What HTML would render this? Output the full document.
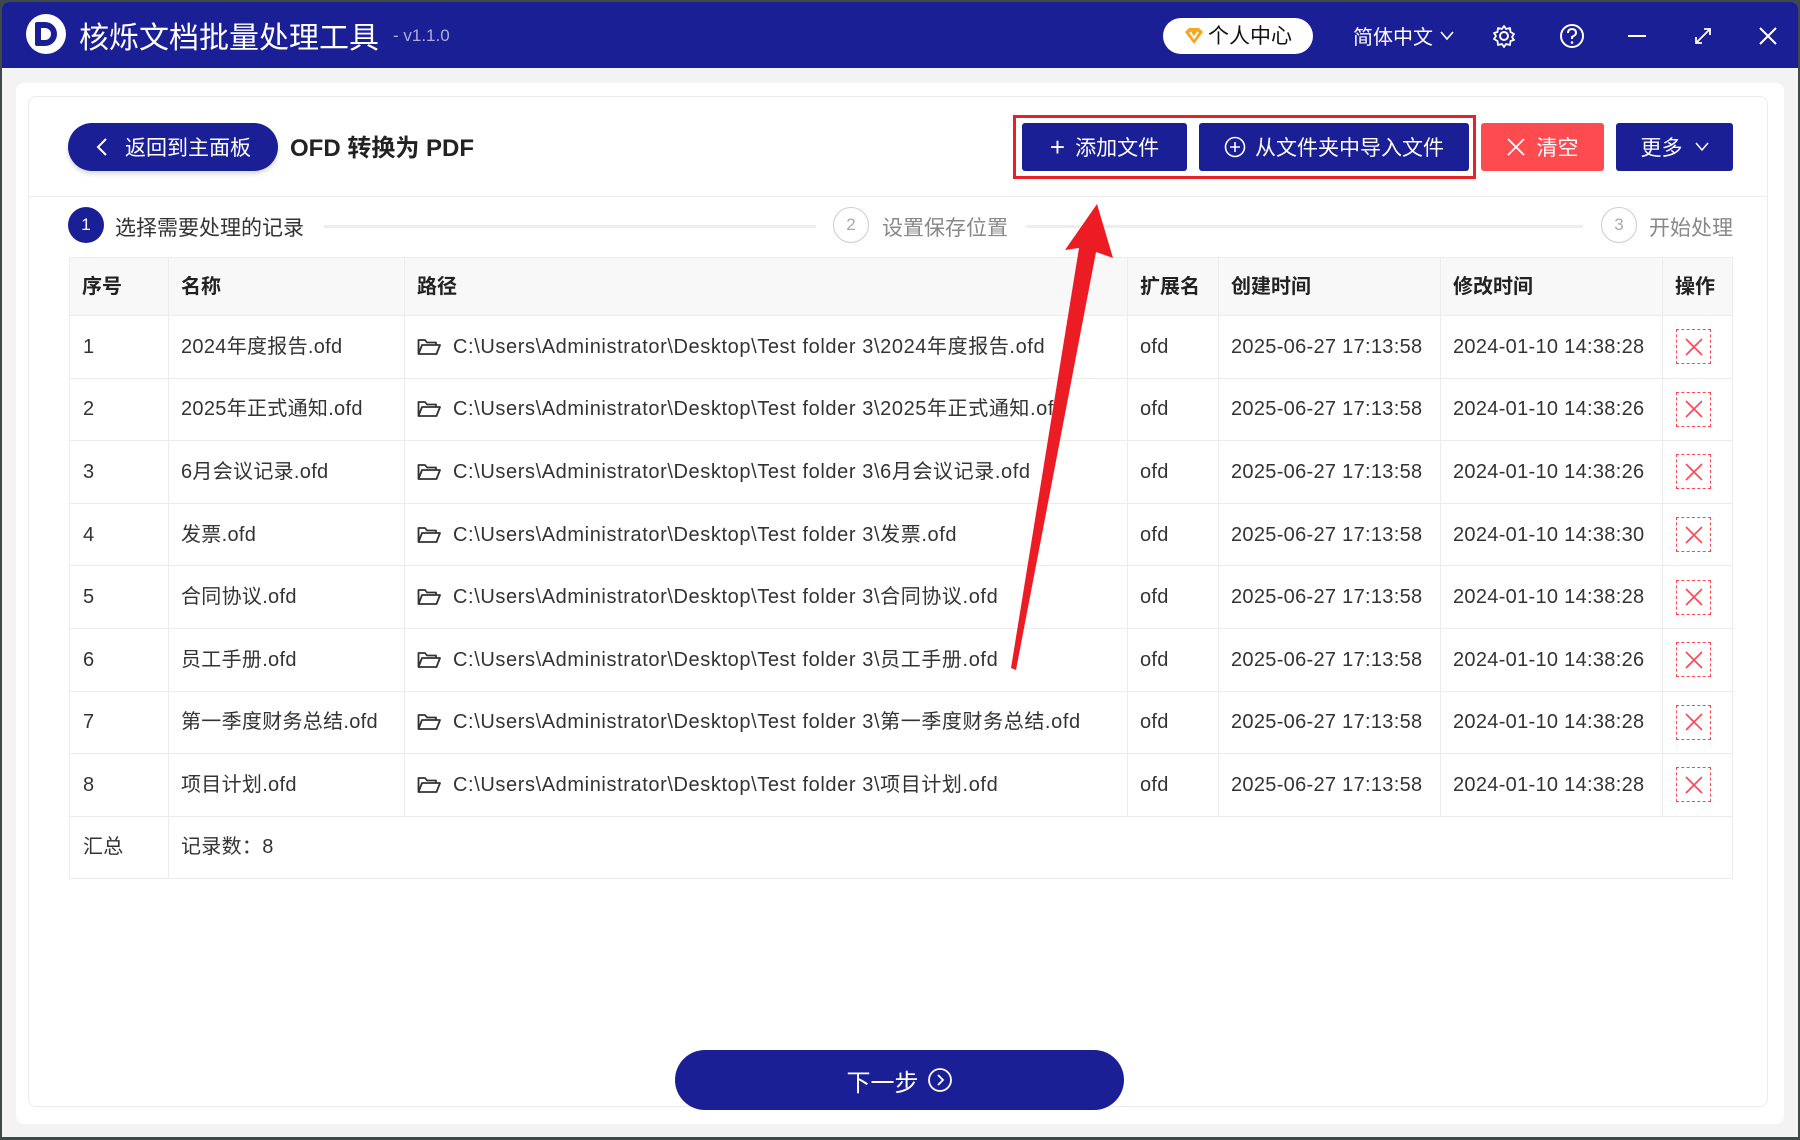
<!DOCTYPE html>
<html><head><meta charset="utf-8"><style>
*{margin:0;padding:0;box-sizing:border-box}
body{width:1800px;height:1140px;overflow:hidden;background:#3d4a48;font-family:"Liberation Sans","Noto Sans CJK SC",sans-serif;position:relative}
.win{position:absolute;left:2px;top:2px;width:1796px;height:1135px;background:#f3f3f3;border-radius:6px 6px 0 0;overflow:hidden}
.bar{position:absolute;left:0;top:0;width:100%;height:66px;background:#1a1f96}
.abs{position:absolute}
.outer{position:absolute;left:14px;top:81px;width:1768px;height:1041px;background:#fff;border-radius:8px}
.card{position:absolute;left:28px;top:96px;width:1740px;height:1011px;background:#fff;border:1px solid #ececec;border-radius:8px}
.btn{position:absolute;top:123px;height:48px;background:#1a1f96;color:#fff;font-size:21px;display:flex;align-items:center;justify-content:center;border-radius:3px}
table{position:absolute;left:69px;top:257px;border-collapse:collapse;table-layout:fixed;width:1663px}
td,th{border:1px solid #ececec;font-size:20px;color:#333;text-align:left;padding-left:12px;white-space:nowrap;overflow:hidden;vertical-align:middle}
th{height:58px;background:#f8f8f8;font-weight:bold;color:#222;line-height:56px}
td{height:62.6px;font-weight:normal;line-height:60px;letter-spacing:0.3px}
td.n{padding-left:13px}
.path{display:flex;align-items:center;letter-spacing:0.6px;height:60px}
.del{width:35px;height:35px;border:1px dashed #f45;display:flex;align-items:center;justify-content:center;margin-left:1px}
.stepc{position:absolute;top:207px;width:36px;height:36px;border-radius:50%;font-size:17px;display:flex;align-items:center;justify-content:center}
.stept{position:absolute;top:212px;font-size:21px}
</style></head><body>
<div class="win">
<div class="bar">
 <div class="abs" style="left:24px;top:12px;width:40px;height:40px;border-radius:50%;background:#fff;"></div>
 <div class="abs" style="left:33px;top:20px;width:22px;height:24px;border:6px solid #1a1f96;border-radius:2px 12px 12px 2px;"></div>
 <div class="abs" style="left:77px;top:11px;color:#fff;font-size:30px;">核烁文档批量处理工具</div>
 <div class="abs" style="left:391px;top:24px;color:#aab0d8;font-size:17px;">- v1.1.0</div>
 <div class="abs" style="left:1161px;top:16px;width:150px;height:36px;background:#fff;border-radius:18px;"></div>
 <svg class="abs" style="left:1182px;top:25px" width="20" height="18" viewBox="0 0 20 18"><path d="M1 5 L5 1 H15 L19 5 L10 17Z" fill="#f5a623"/><path d="M6 5 L10 11 L14 5" stroke="#fff" stroke-width="2" fill="none"/></svg>
 <div class="abs" style="left:1206px;top:18px;font-size:21px;color:#111;">个人中心</div>
 <div class="abs" style="left:1351px;top:19px;font-size:20px;color:#fff;">简体中文</div>
 <svg class="abs" style="left:1438px;top:29px" width="14" height="10"><path d="M1 1 L7 8 L13 1" stroke="#fff" stroke-width="1.6" fill="none"/></svg>
 <svg class="abs" style="left:1490px;top:22px" width="24" height="24" viewBox="0 0 24 24"><circle cx="12" cy="12" r="4" stroke="#fff" stroke-width="2" fill="none"/><path d="M12 2 L14 5 L18 4 L18.5 8 L22 10 L20 13 L22 16 L18.5 17 L18 21 L14 20 L12 23 L10 20 L6 21 L5.5 17 L2 15 L4 12 L2 9 L5.5 8 L6 4 L10 5Z" stroke="#fff" stroke-width="1.8" fill="none" stroke-linejoin="round"/></svg>
 <svg class="abs" style="left:1557px;top:21px" width="26" height="26" viewBox="0 0 26 26"><circle cx="13" cy="13" r="11" stroke="#fff" stroke-width="2" fill="none"/><path d="M9 10 Q9 6 13 6 Q17 6 17 10 Q17 12 13 14 V16" stroke="#fff" stroke-width="2" fill="none"/><circle cx="13" cy="19.5" r="1.3" fill="#fff"/></svg>
 <div class="abs" style="left:1626px;top:33px;width:18px;height:2px;background:#fff"></div>
 <svg class="abs" style="left:1691px;top:24px" width="20" height="20"><path d="M3 17 L17 3 M11 3 H17 V9 M3 11 V17 H9" stroke="#fff" stroke-width="1.8" fill="none"/></svg>
 <svg class="abs" style="left:1756px;top:24px" width="20" height="20"><path d="M2 2 L18 18 M18 2 L2 18" stroke="#fff" stroke-width="2"/></svg>
</div>
<div class="outer"></div>
</div>
<div class="card"></div>
<div class="btn" style="left:68px;width:210px;border-radius:24px;box-shadow:0 3px 5px rgba(0,0,0,.15)"><svg width="14" height="20" style="margin-right:16px"><path d="M11 2 L3 10 L11 18" stroke="#fff" stroke-width="2" fill="none"/></svg>返回到主面板</div>
<div class="abs" style="left:290px;top:128px;font-size:24px;font-weight:bold;color:#222">OFD 转换为 PDF</div>
<div class="abs" style="left:1013px;top:115px;width:463px;height:64px;border:3px solid #e8202a"></div>
<div class="btn" style="left:1022px;width:165px"><span style="font-size:26px;margin-right:10px;font-weight:300">+</span>添加文件</div>
<div class="btn" style="left:1199px;width:270px"><svg width="22" height="22" style="margin-right:9px"><circle cx="11" cy="11" r="9.5" stroke="#fff" stroke-width="1.6" fill="none"/><path d="M11 6V16M6 11H16" stroke="#fff" stroke-width="1.6"/></svg>从文件夹中导入文件</div>
<div class="btn" style="left:1481px;width:123px;background:#fe4b50"><svg width="18" height="18" style="margin-right:12px"><path d="M1 1L17 17M17 1L1 17" stroke="#fff" stroke-width="1.8"/></svg>清空</div>
<div class="btn" style="left:1616px;width:117px">更多<svg width="14" height="10" style="margin-left:12px"><path d="M1 1L7 8L13 1" stroke="#fff" stroke-width="1.5" fill="none"/></svg></div>
<div class="abs" style="left:29px;top:196px;width:1739px;height:1px;background:#ececec"></div>
<div class="stepc" style="left:68px;background:#1a1f96;color:#fff">1</div>
<div class="stept" style="left:115px;color:#333">选择需要处理的记录</div>
<div class="abs" style="left:324px;top:225px;width:492px;height:3px;background:#eee"></div>
<div class="stepc" style="left:833px;border:1.5px solid #ccc;color:#aaa">2</div>
<div class="stept" style="left:882px;color:#888">设置保存位置</div>
<div class="abs" style="left:1026px;top:225px;width:557px;height:3px;background:#eee"></div>
<div class="stepc" style="left:1601px;border:1.5px solid #ccc;color:#aaa">3</div>
<div class="stept" style="left:1649px;color:#888">开始处理</div>
<table>
<colgroup><col style="width:99px"><col style="width:236px"><col style="width:723px"><col style="width:91px"><col style="width:222px"><col style="width:222px"><col style="width:70px"></colgroup>
<tr><th>序号</th><th>名称</th><th>路径</th><th>扩展名</th><th>创建时间</th><th>修改时间</th><th>操作</th></tr>
<tr><td class="n">1</td><td>2024年度报告.ofd</td><td><div class="path"><svg width="24" height="18" style="margin-right:12px"><path d="M1.5 16V2H8L10 4.5H19V7M1.5 16L5 7H23L19.5 16Z" stroke="#333" stroke-width="1.8" fill="none" stroke-linejoin="round"/></svg>C:\Users\Administrator\Desktop\Test folder 3\2024年度报告.ofd</div></td><td>ofd</td><td>2025-06-27 17:13:58</td><td>2024-01-10 14:38:28</td><td><div class="del"><svg width="18" height="18"><path d="M1 1L17 17M17 1L1 17" stroke="#f45" stroke-width="1.6"/></svg></div></td></tr>
<tr><td class="n">2</td><td>2025年正式通知.ofd</td><td><div class="path"><svg width="24" height="18" style="margin-right:12px"><path d="M1.5 16V2H8L10 4.5H19V7M1.5 16L5 7H23L19.5 16Z" stroke="#333" stroke-width="1.8" fill="none" stroke-linejoin="round"/></svg>C:\Users\Administrator\Desktop\Test folder 3\2025年正式通知.ofd</div></td><td>ofd</td><td>2025-06-27 17:13:58</td><td>2024-01-10 14:38:26</td><td><div class="del"><svg width="18" height="18"><path d="M1 1L17 17M17 1L1 17" stroke="#f45" stroke-width="1.6"/></svg></div></td></tr>
<tr><td class="n">3</td><td>6月会议记录.ofd</td><td><div class="path"><svg width="24" height="18" style="margin-right:12px"><path d="M1.5 16V2H8L10 4.5H19V7M1.5 16L5 7H23L19.5 16Z" stroke="#333" stroke-width="1.8" fill="none" stroke-linejoin="round"/></svg>C:\Users\Administrator\Desktop\Test folder 3\6月会议记录.ofd</div></td><td>ofd</td><td>2025-06-27 17:13:58</td><td>2024-01-10 14:38:26</td><td><div class="del"><svg width="18" height="18"><path d="M1 1L17 17M17 1L1 17" stroke="#f45" stroke-width="1.6"/></svg></div></td></tr>
<tr><td class="n">4</td><td>发票.ofd</td><td><div class="path"><svg width="24" height="18" style="margin-right:12px"><path d="M1.5 16V2H8L10 4.5H19V7M1.5 16L5 7H23L19.5 16Z" stroke="#333" stroke-width="1.8" fill="none" stroke-linejoin="round"/></svg>C:\Users\Administrator\Desktop\Test folder 3\发票.ofd</div></td><td>ofd</td><td>2025-06-27 17:13:58</td><td>2024-01-10 14:38:30</td><td><div class="del"><svg width="18" height="18"><path d="M1 1L17 17M17 1L1 17" stroke="#f45" stroke-width="1.6"/></svg></div></td></tr>
<tr><td class="n">5</td><td>合同协议.ofd</td><td><div class="path"><svg width="24" height="18" style="margin-right:12px"><path d="M1.5 16V2H8L10 4.5H19V7M1.5 16L5 7H23L19.5 16Z" stroke="#333" stroke-width="1.8" fill="none" stroke-linejoin="round"/></svg>C:\Users\Administrator\Desktop\Test folder 3\合同协议.ofd</div></td><td>ofd</td><td>2025-06-27 17:13:58</td><td>2024-01-10 14:38:28</td><td><div class="del"><svg width="18" height="18"><path d="M1 1L17 17M17 1L1 17" stroke="#f45" stroke-width="1.6"/></svg></div></td></tr>
<tr><td class="n">6</td><td>员工手册.ofd</td><td><div class="path"><svg width="24" height="18" style="margin-right:12px"><path d="M1.5 16V2H8L10 4.5H19V7M1.5 16L5 7H23L19.5 16Z" stroke="#333" stroke-width="1.8" fill="none" stroke-linejoin="round"/></svg>C:\Users\Administrator\Desktop\Test folder 3\员工手册.ofd</div></td><td>ofd</td><td>2025-06-27 17:13:58</td><td>2024-01-10 14:38:26</td><td><div class="del"><svg width="18" height="18"><path d="M1 1L17 17M17 1L1 17" stroke="#f45" stroke-width="1.6"/></svg></div></td></tr>
<tr><td class="n">7</td><td>第一季度财务总结.ofd</td><td><div class="path"><svg width="24" height="18" style="margin-right:12px"><path d="M1.5 16V2H8L10 4.5H19V7M1.5 16L5 7H23L19.5 16Z" stroke="#333" stroke-width="1.8" fill="none" stroke-linejoin="round"/></svg>C:\Users\Administrator\Desktop\Test folder 3\第一季度财务总结.ofd</div></td><td>ofd</td><td>2025-06-27 17:13:58</td><td>2024-01-10 14:38:28</td><td><div class="del"><svg width="18" height="18"><path d="M1 1L17 17M17 1L1 17" stroke="#f45" stroke-width="1.6"/></svg></div></td></tr>
<tr><td class="n">8</td><td>项目计划.ofd</td><td><div class="path"><svg width="24" height="18" style="margin-right:12px"><path d="M1.5 16V2H8L10 4.5H19V7M1.5 16L5 7H23L19.5 16Z" stroke="#333" stroke-width="1.8" fill="none" stroke-linejoin="round"/></svg>C:\Users\Administrator\Desktop\Test folder 3\项目计划.ofd</div></td><td>ofd</td><td>2025-06-27 17:13:58</td><td>2024-01-10 14:38:28</td><td><div class="del"><svg width="18" height="18"><path d="M1 1L17 17M17 1L1 17" stroke="#f45" stroke-width="1.6"/></svg></div></td></tr>
<tr><td class="n" style="height:59px;line-height:57px">汇总</td><td colspan="6" style="border-left:1px solid #ececec;line-height:57px">记录数：8</td></tr>
</table>
<svg class="abs" style="left:0;top:0" width="1800" height="1140"><polygon points="1097,204 1113,258 1096,252 1016,670 1011,668 1079,248 1065,250" fill="#ec1c24"/></svg>
<div class="abs" style="left:675px;top:1050px;width:449px;height:60px;background:#1a1f96;border-radius:30px;color:#fff;font-size:24px;display:flex;align-items:center;justify-content:center">下一步<svg width="26" height="26" style="margin-left:8px"><circle cx="13" cy="13" r="11" stroke="#fff" stroke-width="1.8" fill="none"/><path d="M11 8L16 13L11 18" stroke="#fff" stroke-width="1.8" fill="none"/></svg></div>
</body></html>
